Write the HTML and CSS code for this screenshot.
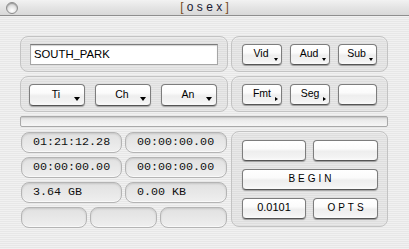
FILE: index.html
```html
<!DOCTYPE html>
<html>
<head>
<meta charset="utf-8">
<title>osex</title>
<link rel="stylesheet" href="styles.css">
</head>
<body>
<div class="window">
  <header class="titlebar">
    <span class="close"></span>
    <span class="title"><span class="br">[</span> o s e x <span class="br">]</span></span>
    <span></span>
  </header>
  <main class="content">
    <section class="top">
      <div class="group g-name">
        <div class="field">SOUTH_PARK</div>
      </div>
      <div class="group g-tracks">
        <div class="btn pop w40">Vid</div>
        <div class="btn pop w40">Aud</div>
        <div class="btn pop w39">Sub</div>
      </div>
      <div class="group g-titles">
        <div class="btn pop big">Ti</div>
        <div class="btn pop big">Ch</div>
        <div class="btn pop big">An</div>
      </div>
      <div class="group g-fmt">
        <div class="btn menu w40">Fmt</div>
        <div class="btn menu w40">Seg</div>
        <div class="btn w39"></div>
      </div>
    </section>
    <div class="progress"></div>
    <section class="bottom">
      <div class="cells">
        <div class="row two"><div class="cell">01:21:12.28</div><div class="cell">00:00:00.00</div></div>
        <div class="row two"><div class="cell">00:00:00.00</div><div class="cell">00:00:00.00</div></div>
        <div class="row two"><div class="cell">3.64 GB</div><div class="cell">0.00 KB</div></div>
        <div class="row three"><div class="cell"></div><div class="cell"></div><div class="cell"></div></div>
      </div>
      <div class="group actions">
        <div class="btn"></div>
        <div class="btn"></div>
        <div class="btn wide spaced">BEGIN</div>
        <div class="btn num">0.0101</div>
        <div class="btn spaced">OPTS</div>
      </div>
    </section>
  </main>
</div>
</body>
</html>
```

FILE: styles.css
```css
* { box-sizing: border-box; }
html, body { margin: 0; padding: 0; }
body {
  width: 409px;
  height: 249px;
  overflow: hidden;
  font-family: "Liberation Sans", Arial, sans-serif;
  color: #000;
}
.window {
  width: 409px;
  height: 249px;
  background: repeating-linear-gradient(to bottom, #f1f1f1 0, #f1f1f1 1px, #e7e7e7 1px, #e7e7e7 2px);
}
.titlebar {
  height: 16px;
  display: grid;
  grid-template-columns: 1fr auto 1fr;
  align-items: center;
  background: linear-gradient(to bottom, #f2f2f2 0%, #e4e4e4 50%, #d9d9d9 100%);
  border-bottom: 1px solid #8e8e8e;
}
.close {
  width: 12px;
  height: 12px;
  margin-left: 6px;
  margin-top: 1px;
  border-radius: 50%;
  border: 1px solid #8c8c8c;
  background: radial-gradient(circle at 50% 75%, #ffffff 0%, #e6e6e6 45%, #b9b9b9 100%);
  box-shadow: inset 0 1px 1px rgba(0,0,0,0.25);
}
.title {
  font-size: 12px;
  line-height: 15px;
  color: #1c1c34;
  white-space: pre;
}
.title .br { color: #7a4c1e; }
.content {
  padding: 20px 0 0 20px;
}
.top {
  display: grid;
  grid-template-columns: 208px 157px;
  grid-auto-rows: 36px;
  column-gap: 3px;
  row-gap: 4px;
}
.group {
  border: 1px solid #c3c3c3;
  border-radius: 8px;
  background: rgba(0,0,0,0.035);
  box-shadow: inset 0 1px 0 rgba(255,255,255,0.4);
}
.g-name { padding: 7px 9px 0 9px; }
.field {
  height: 21px;
  background: #fff;
  border: 1px solid #a6a6a6;
  border-top-color: #7b7b7b;
  box-shadow: inset 0 1px 1px rgba(0,0,0,0.18);
  font-size: 11.3px;
  line-height: 19px;
  padding-left: 3px;
}
.g-tracks, .g-fmt {
  display: flex;
  gap: 8px;
  padding: 7px 0 0 10px;
}
.g-titles {
  display: flex;
  gap: 10px;
  padding: 7px 0 0 8px;
}
.btn {
  position: relative;
  height: 21px;
  border: 1px solid #7d7d7d;
  border-bottom-color: #555;
  border-radius: 4px;
  background: linear-gradient(to bottom, #ffffff 0%, #fbfbfb 40%, #eeeeee 55%, #f3f3f3 85%, #fbfbfb 100%);
  box-shadow: 0 1px 1px rgba(0,0,0,0.3);
  font-size: 10.5px;
  line-height: 17px;
  text-align: center;
  color: #000;
}
.w40 { width: 40px; }
.w39 { width: 39px; }
.big { width: 56px; height: 22px; line-height: 18px; }
.pop { padding-right: 2px; }
.pop::after {
  content: "";
  position: absolute;
  right: 3px;
  bottom: 3px;
  border-left: 2.5px solid transparent;
  border-right: 2.5px solid transparent;
  border-top: 3px solid #000;
}
.big.pop::after {
  right: 4px;
  bottom: 4px;
  border-left-width: 3px;
  border-right-width: 3px;
  border-top-width: 4px;
}
.menu::after {
  content: "";
  position: absolute;
  right: 3px;
  bottom: 3px;
  border-top: 2px solid transparent;
  border-bottom: 2px solid transparent;
  border-left: 3px solid #000;
}
.progress {
  width: 368px;
  height: 11px;
  margin-top: 4px;
  border: 1px solid #a9a9a9;
  border-radius: 2px;
  background: linear-gradient(to bottom, #dcdcdc 0%, #ececec 40%, #f6f6f6 100%);
  box-shadow: inset 0 1px 1px rgba(0,0,0,0.1);
}
.bottom {
  display: flex;
  gap: 4px;
  margin-top: 4px;
}
.cells {
  width: 206px;
  margin: 1px 0 0 1px;
  display: flex;
  flex-direction: column;
  gap: 4px;
}
.row {
  display: grid;
  column-gap: 3px;
  height: 21px;
}
.row.two { grid-template-columns: 101px 102px; }
.row.three { grid-template-columns: 66px 67px 67px; }
.cell {
  border: 1px solid #b4b4b4;
  border-radius: 8px;
  background: linear-gradient(to bottom, #e1e1e1 0%, #e9e9e9 60%, #efefef 100%);
  box-shadow: inset 0 1px 2px rgba(0,0,0,0.12), inset 0 -1px 0 rgba(255,255,255,0.7);
  font-family: "Liberation Mono", "Courier New", monospace;
  font-size: 11.7px;
  line-height: 19px;
  padding-left: 11px;
  color: #111;
}
.actions {
  width: 157px;
  height: 96px;
  display: grid;
  grid-template-columns: 64px 65px;
  grid-auto-rows: 21px;
  column-gap: 7px;
  row-gap: 8px;
  padding: 8px 0 0 10px;
  align-content: start;
}
.wide { grid-column: 1 / span 2; }
.spaced {
  font-size: 10px;
  letter-spacing: 3px;
  text-indent: 3px;
}
.num { font-size: 11px; }
```
